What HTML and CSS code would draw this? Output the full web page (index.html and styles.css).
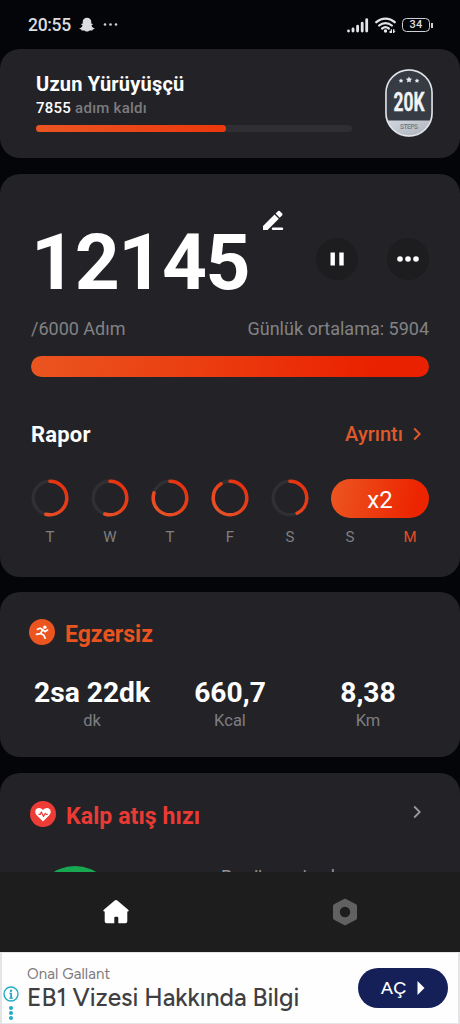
FILE: index.html
```html
<!DOCTYPE html>
<html lang="tr">
<head>
<meta charset="utf-8">
<title>Adım Sayar</title>
<link rel="stylesheet" href="styles.css">
</head>
<body>
<svg class="defs" width="0" height="0" aria-hidden="true">
  <defs>
    <linearGradient id="ring" x1="0" y1="0" x2="1" y2="1"><stop offset="0" stop-color="#e8562a"/><stop offset="1" stop-color="#e92c0b"/></linearGradient>
    <linearGradient id="silver" x1="0" y1="0" x2="1" y2="1"><stop offset="0" stop-color="#d4dae2"/><stop offset="1" stop-color="#a5aab4"/></linearGradient>
  </defs>
</svg>
<div class="screen">
  <header class="status">
    <span class="time">20:55</span>
    <svg class="ghost" width="16" height="16" viewBox="0 0 16 16"><path fill="#dcdde0" d="M8 .8c2.600 0 4.300 1.900 4.300 4.200v1.700c.5.2 1.200-.2 1.500.3.3.6-.9 1-1.300 1.400.4 1.400 1.500 2.400 3 2.800.4.7-.7 1-1.800 1.200-.2.5-.1.9-.5 1-.8.1-1.600-.2-2.400.2-.8.5-1.400 1-2.800 1s-2-.5-2.800-1c-.8-.4-1.600-.1-2.400-.2-.4-.1-.3-.5-.5-1C1.200 12.200.1 11.900.5 11.200c1.500-.4 2.600-1.400 3-2.800-.4-.4-1.600-.8-1.300-1.400.3-.5 1-.1 1.500-.3V5C3.700 2.700 5.400.8 8 .8z"/></svg>
    <svg width="16" height="4" viewBox="0 0 16 4"><g fill="#d0d1d4"><circle cx="2" cy="1.500" r="1.300"/><circle cx="7.500" cy="1.500" r="1.300"/><circle cx="13" cy="1.500" r="1.300"/></g></svg>
    <span class="grow"></span>
    <svg class="signal" width="22" height="15" viewBox="0 0 22 15"><path stroke="#e4e5e8" stroke-width="2.800" stroke-linecap="round" d="M1.500 12.900v.2M6 11v2.100M10.600 8.200v4.900M15.200 5.200v7.900M19.700 1.600v11.500"/></svg>
    <svg class="wifi" width="21" height="17" viewBox="0 0 21 17"><g fill="none" stroke="#e4e5e8" stroke-width="2.300" stroke-linecap="round"><path d="M1.300 5.200c5.300-4.900 13.100-4.900 18.400 0M4.200 8.500c3.700-3.200 8.900-3.200 12.600 0M7.200 11.500c2-1.600 4.600-1.600 6.600 0"/></g><circle cx="10.500" cy="14" r="1.700" fill="#e4e5e8"/><path fill="#e4e5e8" d="M14.500 16V14h1.200v-1.800h1.300V16zM18 12.200h1.300v1.600h1v1h-1V16H18z"/></svg>
    <span class="battery">34</span><span class="battery-tip"></span>
  </header>

  <section class="card goal">
    <div class="goal-text">
      <h2 class="goal-title">Uzun Yürüyüşçü</h2>
      <p class="goal-left"><b>7855</b> adım kaldı</p>
      <div class="track"><div class="fill"></div></div>
    </div>
    <svg class="badge" width="50" height="70" viewBox="0 0 50 70">
      <clipPath id="pill"><rect x="2" y="2" width="46" height="66" rx="23"/></clipPath>
      <rect x="1" y="1" width="48" height="68" rx="24" fill="#6a6f77"/>
      <g clip-path="url(#pill)"><rect width="50" height="70" fill="#363b44"/><rect y="52.500" width="50" height="18" fill="url(#silver)"/></g>
      <rect x="2" y="2" width="46" height="66" rx="23" fill="none" stroke="#e3e6eb" stroke-width="1.500"/>
      <g fill="#e6e9ee"><path d="M25 8.500l1 2 2.200.3-1.600 1.500.4 2.200-2-1.100-2 1.100.4-2.200-1.600-1.500 2.200-.3z"/><path d="M17 10.400l.8 1.400 1.600.2-1.200 1.100.3 1.600-1.500-.7-1.500.7.3-1.600-1.200-1.100 1.600-.2zM33 10.400l.8 1.400 1.600.2-1.200 1.100.3 1.600-1.500-.7-1.500.7.3-1.600-1.200-1.100 1.600-.2z"/></g>
      <text class="badge-num" x="9.500" y="43" textLength="31" lengthAdjust="spacingAndGlyphs">20K</text>
      <text class="badge-steps" x="16" y="61" textLength="18">STEPS</text>
    </svg>
  </section>

  <section class="card today">
    <div class="count-row">
      <span class="count">12145</span>
      <svg class="pencil" width="22" height="22" viewBox="0 0 22 22"><path fill="#fff" d="M1 17 12.500 5.500l4.300 4.300L5.600 21H1zM13.600 4.600l2.500-2.500q.8-.7 1.600 0l2.500 2.500q.7.800 0 1.600l-2.500 2.500z"/><path stroke="#fff" stroke-width="2.400" stroke-linecap="round" d="M11 19.800h9"/></svg>
      <span class="grow"></span>
      <span class="round"><svg width="14" height="14" viewBox="0 0 14 14"><path fill="#fff" d="M.5.500h4.400v13H.5zM9.300.500h4.400v13H9.300z"/></svg></span>
      <span class="round"><svg width="22" height="6" viewBox="0 0 22 6"><g fill="#fff"><circle cx="3" cy="3" r="2.800"/><circle cx="11" cy="3" r="2.800"/><circle cx="19" cy="3" r="2.800"/></g></svg></span>
    </div>
    <div class="sub-row"><span class="target">/6000 Adım</span><span class="average">Günlük ortalama: 5904</span></div>
    <div class="bar"></div>
    <div class="report-head">
      <h2 class="report-title">Rapor</h2>
      <span class="detail">Ayrıntı</span>
      <svg width="8" height="14" viewBox="0 0 8 14"><path d="M1.200 1.500 6.700 7l-5.500 5.500" fill="none" stroke="#df592b" stroke-width="2"/></svg>
    </div>
    <div class="week">
      <div class="day"><svg class="ring" viewBox="0 0 38 38"><circle class="ring-bg" cx="19" cy="19" r="16.800"/><circle class="ring-fg" cx="19" cy="19" r="16.800" pathLength="100" stroke-dasharray="54 100"/></svg><span>T</span></div>
      <div class="day"><svg class="ring" viewBox="0 0 38 38"><circle class="ring-bg" cx="19" cy="19" r="16.800"/><circle class="ring-fg" cx="19" cy="19" r="16.800" pathLength="100" stroke-dasharray="55 100"/></svg><span>W</span></div>
      <div class="day"><svg class="ring" viewBox="0 0 38 38"><circle class="ring-bg" cx="19" cy="19" r="16.800"/><circle class="ring-fg" cx="19" cy="19" r="16.800" pathLength="100" stroke-dasharray="80 100"/></svg><span>T</span></div>
      <div class="day"><svg class="ring" viewBox="0 0 38 38"><circle class="ring-bg" cx="19" cy="19" r="16.800"/><circle class="ring-fg" cx="19" cy="19" r="16.800" pathLength="100" stroke-dasharray="91 100"/></svg><span>F</span></div>
      <div class="day"><svg class="ring" viewBox="0 0 38 38"><circle class="ring-bg" cx="19" cy="19" r="16.800"/><circle class="ring-fg" cx="19" cy="19" r="16.800" pathLength="100" stroke-dasharray="43 100"/></svg><span>S</span></div>
      <div class="streak"><div class="streak-pill">x2</div><div class="streak-days"><span>S</span><span class="now">M</span></div></div>
    </div>
  </section>

  <section class="card exercise">
    <div class="head">
      <svg width="26" height="26" viewBox="0 0 26 26"><circle cx="13" cy="13" r="13" fill="#ec5420"/><circle cx="15.800" cy="8.200" r="1.700" fill="#fff"/><path d="M8.500 10.300l2.500-1.100 3 1.600 2 1.900 2.600-1.800M13.600 11l-2.300 3.700-3.800.7M11.800 14.500l3 1.700 1.300 3" fill="none" stroke="#fff" stroke-width="1.700" stroke-linecap="round" stroke-linejoin="round"/></svg>
      <h2 class="head-title orange">Egzersiz</h2>
    </div>
    <div class="stats">
      <div class="stat"><b>2sa 22dk</b><span>dk</span></div>
      <div class="stat"><b>660,7</b><span>Kcal</span></div>
      <div class="stat"><b>8,38</b><span>Km</span></div>
    </div>
  </section>

  <section class="card heart">
    <div class="head">
      <svg width="26" height="26" viewBox="0 0 26 26"><circle cx="13" cy="13" r="13" fill="#ed3c36"/><path fill="#fff" d="M13 20.500 7 14.600C3.800 11.200 5.400 7 9 7c1.700 0 3 .8 4 2.100C14 7.800 15.300 7 17 7c3.600 0 5.200 4.200 2 7.600z"/><path d="M8.500 13.400h1.700l1.200-2.300 2.100 4.400 1.600-3 1 .9h1.700" fill="none" stroke="#ed3c36" stroke-width="1.200" stroke-linejoin="round"/></svg>
      <h2 class="head-title red">Kalp atış hızı</h2>
      <span class="grow"></span>
      <svg class="chev" width="8" height="14" viewBox="0 0 8 14"><path d="M1.200 1.500 6.700 7l-5.500 5.500" fill="none" stroke="#99999b" stroke-width="1.800"/></svg>
    </div>
    <div class="heart-body"><span class="dot"></span><span class="nodata">Bugün veri yok</span></div>
  </section>

  <nav class="tabs">
    <div class="tab home"><svg width="26" height="26" viewBox="0 0 26 26"><path fill="#fff" d="M13 1q.7 0 1.300.5l10.900 9.300c.9.900.5 1.700-.4 1.700h-.5v9.800q0 2-2 2h-7v-5.600q0-1-1-1h-2q-1 0-1 1v5.600H3.700q-2 0-2-2v-9.800h-.5c-.9 0-1.300-.8-.4-1.700l10.900-9.300Q12.300 1 13 1z"/></svg></div>
    <div class="tab"><svg width="26" height="28" viewBox="0 0 26 28"><path fill="#616161" fill-rule="evenodd" d="M12 .9q1-.5 2 0l10 5.400q1 .6 1 1.700v12q0 1.100-1 1.700l-10 5.400q-1 .5-2 0L2 21.700Q1 21.100 1 20V8q0-1.100 1-1.700zM13 8.800a5.200 5.200 0 1 0 0 10.400 5.200 5.200 0 0 0 0-10.400z"/></svg></div>
  </nav>

  <footer class="ad">
    <svg class="ad-info" width="16" height="36" viewBox="0 0 16 36"><g fill="#21abc6"><circle cx="8" cy="8" r="7" fill="none" stroke="#21abc6" stroke-width="1.400"/><circle cx="8" cy="4.700" r="1.200"/><path d="M6.300 6.800H9v4.700h1v1.200H6.300v-1.200h.9V8h-.9z"/><circle cx="8" cy="22" r="2"/><circle cx="8" cy="27" r="2"/><circle cx="8" cy="32" r="2"/></g></svg>
    <div class="ad-text"><span class="ad-name">Onal Gallant</span><span class="ad-title">EB1 Vizesi Hakkında Bilgi</span></div>
    <span class="grow"></span>
    <span class="ad-btn">AÇ<svg width="8" height="14" viewBox="0 0 8 14"><path fill="#fff" d="M.5 0 7.500 7l-7 7z"/></svg></span>
  </footer>
</div>
</body>
</html>
```
FILE: styles.css
```css
* { box-sizing: border-box; margin: 0; padding: 0; }
body { background: #030509; font-family: Roboto, "Liberation Sans", sans-serif; color: #fff; }
svg { display: block; flex: none; }
.defs { position: absolute; }
.screen { width: 460px; height: 1024px; overflow: hidden; display: flex; flex-direction: column; }
.screen > * { flex: none; }
.grow { flex: 1; }
h2 { line-height: 1; white-space: nowrap; }

.status { height: 49px; padding: 1px 27px 0 28px; display: flex; align-items: center; color: #dcdde0; }
.time { width: 44px; font-size: 17.500px; font-weight: 500; letter-spacing: -.3px; }
.ghost { margin: 0 8px 0 7px; }
.signal { margin-right: 6px; }
.wifi { margin-right: 6px; }
.battery { width: 28px; height: 14px; border: 1.500px solid #cfd0d3; border-radius: 4.500px; font-size: 11px; font-weight: 500; line-height: 12px; text-align: center; letter-spacing: .3px; }
.battery-tip { width: 2px; height: 5px; margin-left: 1px; background: #cfd0d3; }

.card { background: #232327; border-radius: 20px; margin-bottom: 16px; }
.goal { height: 109px; padding: 20px 26px 0 36px; display: flex; justify-content: space-between; }
.goal-text { width: 316px; padding-top: 5px; }
.goal-title { font-size: 20px; font-weight: 700; letter-spacing: .2px; }
.goal-left { margin-top: 5px; font-size: 15px; line-height: 18px; color: #7c7c7f; font-weight: 500; letter-spacing: .25px; }
.goal-left b { color: #fff; font-weight: 500; }
.track { height: 7px; margin-top: 8px; background: #2f2f33; border-radius: 3px; }
.fill { width: 190px; height: 7px; border-radius: 4px; background: linear-gradient(90deg, #ea5522, #ec380d); }
.badge { margin-top: -1px; }
.badge-num { font: 700 26px Roboto, sans-serif; fill: #f2f3f5; stroke: #f2f3f5; stroke-width: .4px; }
.badge-steps { font: 500 6.500px Roboto, sans-serif; fill: #71757d; }

.today { height: 403px; margin-bottom: 15px; padding: 34px 31px 0; }
.count-row { display: flex; align-items: flex-start; height: 100px; }
.count { width: 218px; font-size: 78.500px; line-height: 108px; font-weight: 700; letter-spacing: -1.400px; }
.pencil { margin: 1px 0 0 13px; }
.round { width: 42px; height: 42px; margin: 30px 0 0 29px; border-radius: 50%; background: #1d1d20; display: flex; align-items: center; justify-content: center; }
.grow + .round { margin-left: 0; }
.sub-row { height: 42px; display: flex; justify-content: space-between; font-size: 18px; line-height: 42px; color: #828284; }
.bar { height: 20.500px; margin-top: 6px; border-radius: 11px; background: linear-gradient(100deg, #ea5520, #eb390e 50%, #ea2100 85%); }
.report-head { margin: 44.500px 8px 0 0; height: 26px; display: flex; align-items: center; }
.report-title { flex: 1; padding-top: 1px; font-size: 22px; font-weight: 700; letter-spacing: .2px; }
.detail { margin-right: 10px; font-size: 20px; color: #df592b; font-weight: 500; }
.week { margin-top: 32px; display: flex; }
.day { width: 60px; }
.ring { width: 38px; height: 38px; fill: none; stroke-width: 3.500; stroke-linecap: round; }
.ring-bg { stroke: #303034; }
.ring-fg { stroke: url(#ring); transform: rotate(-90deg); transform-origin: center; }
.day span { display: block; width: 38px; text-align: center; }
.day span, .streak-days { margin-top: 11px; font-size: 15px; line-height: 18px; color: #7e7e81; }
.streak { width: 98px; }
.streak-pill { height: 39px; border-radius: 20px; background: linear-gradient(100deg, #ec5622, #ec2500 85%); font-size: 24px; line-height: 42px; text-align: center; }
.streak-days { display: flex; justify-content: space-between; margin-top: 10px; }
.streak-days span { width: 38px; text-align: center; }
.streak-days .now { color: #e44d28; }

.exercise { height: 165px; padding: 27px 0 0 29px; }
.head { display: flex; height: 30px; }
.head-title { margin: 4px 0 0 10px; font-size: 23px; font-weight: 700; }
.orange { color: #e8531f; }
.red { color: #e93a34; }
.stats { display: flex; margin: 27px 23px 0 -6px; }
.stat { width: 138px; text-align: center; }
.stat b { display: block; font-size: 28.200px; line-height: 34px; font-weight: 700; }
.stat span { display: block; margin-top: 1px; font-size: 16.500px; line-height: 20px; color: #7e7e81; }

.heart { height: 99px; margin: 0; padding: 28px 39px 0 30px; border-radius: 20px 20px 0 0; overflow: hidden; }
.chev { margin-top: 4px; }
.heart .head-title { letter-spacing: .1px; }
.heart-body { margin-top: 34px; display: flex; align-items: flex-start; }
.dot { flex: none; width: 80px; height: 80px; margin: 1px 0 0 5px; border-radius: 50%; background: #17a851; }
.nodata { margin-left: 106px; font-size: 18.400px; line-height: 24px; color: #929295; white-space: nowrap; }

.tabs { height: 80px; background: #1d1d1e; display: flex; align-items: center; }
.tab { width: 230px; display: flex; justify-content: center; }
.home { padding-left: 1px; }

.ad { height: 72px; padding: 0 10px 0 1px; background: #fefefe; border: solid #e4e4e6; border-width: 1px 2px; display: flex; color: #3f3f42; font-family: Figtree, "Google Sans", Lato, sans-serif; }
.ad-info { margin-top: 33px; }
.ad-text { margin-left: 8px; padding-top: 12px; white-space: nowrap; display: flex; flex-direction: column; }
.ad-name { font-size: 15px; line-height: 18px; color: #7c7c7e; letter-spacing: .1px; }
.ad-title { font-size: 24.500px; line-height: 29px; font-weight: 500; }
.ad-btn { width: 90px; height: 40px; margin-top: 15px; border-radius: 20px; background: #152058; color: #fff; display: flex; align-items: center; justify-content: center; gap: 11px; font-size: 18px; font-weight: 500; }
```
